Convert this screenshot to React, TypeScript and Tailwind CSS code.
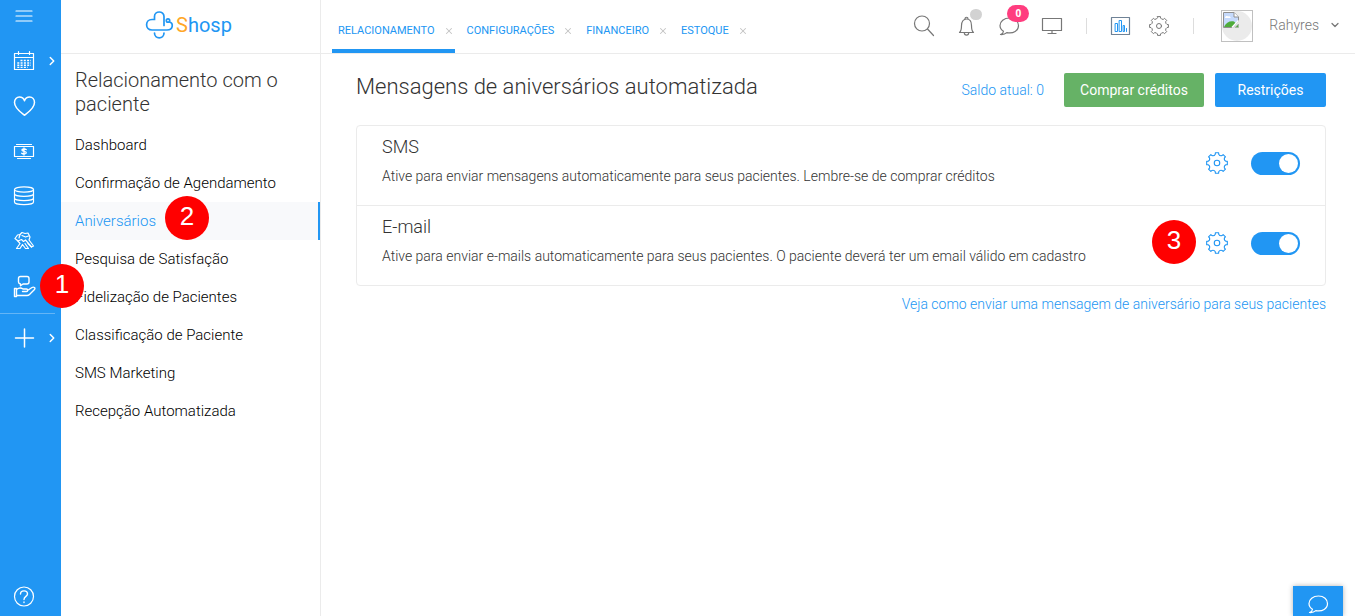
import React, { useState } from "react";
import { ChevronDown, ChevronRight, X } from "lucide-react";

type IconProps = { className?: string };

// Outline of a cog with eight flat teeth and rounded valleys between them
const buildCog = (teeth: number) => {
  const at = (radius: number, deg: number) => {
    const rad = (deg * Math.PI) / 180;
    return `${(12 + radius * Math.cos(rad)).toFixed(2)} ${(12 + radius * Math.sin(rad)).toFixed(2)}`;
  };
  const step = 360 / teeth;
  let d = "";
  for (let i = 0; i < teeth; i++) {
    const a = i * step - 90;
    d += `${i === 0 ? "M" : "L"}${at(11.4, a - 9)} L${at(11.4, a + 9)} L${at(9.8, a + 11)} `;
    d += `Q${at(8, a + step / 2)} ${at(9.8, a + step - 11)} `;
  }
  return d + "Z";
};

const COG_PATH = buildCog(8);

const Line = ({ className = "size-6", children }: IconProps & { children: React.ReactNode }) => (
  <svg viewBox="0 0 24 24" fill="none" stroke="currentColor" strokeWidth="1.2" strokeLinecap="round" strokeLinejoin="round" className={className} aria-hidden="true">
    {children}
  </svg>
);

const CogIcon = ({ className }: IconProps) => (
  <Line className={className}>
    <path d={COG_PATH} />
    <circle cx="12" cy="12" r="3" />
  </Line>
);

const MenuIcon = () => (
  <Line>
    <path d="M4 6.500H20M4 11.500H20M4 16.500H20" transform="translate(0 .5)" />
  </Line>
);

const CalendarIcon = () => (
  <Line>
    <path d="M2.500 4.500h19v16h-19zM2.500 8.500h19M6.500 2.500v3M17.500 2.500v3" />
    <path strokeDasharray="2 1.300" strokeLinecap="butt" strokeWidth="1.400" d="M8.500 11.500h10.500M5.300 14h13.700M5.300 16.300h13.700M5.300 18.400h10.500" />
  </Line>
);

const HeartIcon = () => (
  <Line>
    <path strokeWidth="1.500" d="M12.500 21.300C10 19.200 2.500 14.500 2.500 8.500C2.500 5.300 4.800 3 7.400 3C9.800 3 11.700 4.500 12.500 6.700C13.300 4.500 15.200 3 17.600 3C20.300 3 22.500 5.300 22.500 8.500C22.500 14.500 15 19.200 12.500 21.300Z" />
  </Line>
);

const MoneyIcon = () => (
  <Line>
    <path d="M4.500 5.500h15M5.500 19.500h13M2.500 7.500h19v10h-19z" />
    <path strokeWidth="1.300" d="M14.300 10.600C13.500 9.800 9.900 9.600 9.900 11.100C9.900 12.800 14.300 12 14.300 13.700C14.300 15.300 10.500 15.100 9.700 14.200M12 9v7" />
  </Line>
);

const DatabaseIcon = () => (
  <Line>
    <ellipse cx="12" cy="5.500" rx="9.500" ry="2.700" />
    <path d="M2.500 5.500v12.500c0 1.500 4.200 2.700 9.500 2.700s9.500-1.200 9.500-2.700V5.500M2.500 9.700c0 1.500 4.200 2.700 9.500 2.700s9.500-1.200 9.500-2.700M2.500 13.900c0 1.500 4.200 2.700 9.500 2.700s9.500-1.200 9.500-2.700" />
  </Line>
);

const HandshakeIcon = () => (
  <Line>
    <path d="M3 9.500L5.500 6L8 5.500L10 3.500L13 4.500L16 4L18 8L17 11L21.500 17L19.500 18L13.500 11L11.500 12.500L9.500 10.500L6 12L3 9.500" />
    <path d="M5.500 11.500L8 14.500L4.500 19.500H8L10.500 15.500L13.500 19.500H16.500L13 14.500M10 6.500L13.500 8L16.500 7M19.500 18l-3.500-3.500M8 5.500L7 9" />
  </Line>
);

const HandMessageIcon = () => (
  <Line>
    <path strokeWidth="1.400" d="M8.500 2.500H15C16.300 2.500 17 3.300 17 4.500V8C17 9.200 16.200 10 15 10H11L8.500 11.800V10C7.200 9.800 6.500 9 6.500 8V4.500C6.500 3.300 7.200 2.500 8.500 2.500Z" />
    <path strokeWidth="1.400" d="M2.500 14.500H4.500V22.500H2.500zM4.500 15.500C7 13.500 9 13.500 11 15H14.500C16 15 16 17.500 14.500 17.500H10.500M15.500 16.500L20 13.500C21.800 12.500 23.800 14 22.500 15.500L17.500 20.500C16.800 21.200 16 21.500 15 21.500H4.500" />
  </Line>
);

const PlusIcon = () => (
  <Line>
    <path strokeWidth="1.500" d="M12.500 3v18M3.500 12h18" />
  </Line>
);

const HelpIcon = () => (
  <Line>
    <circle cx="12" cy="12.500" r="9.500" />
    <path strokeWidth="1.400" d="M8.500 10C8.500 5.800 15.500 5.800 15.500 10C15.500 12.500 12 12.300 12 15.500M12 18v.6" />
  </Line>
);

const SearchIcon = () => (
  <Line>
    <circle cx="11" cy="9.500" r="7.500" />
    <path d="M16.500 15L22.500 21.500" />
  </Line>
);

const BellIcon = () => (
  <Line>
    <path d="M5.500 18.500C7.500 17 7.500 15 7.500 11.500C7.500 7.500 9.500 5 12.500 5S17.500 7.500 17.500 11.500C17.500 15 17.500 17 19.500 18.500ZM11 4.800C11 2.700 14 2.700 14 4.800M10.300 18.700C10.300 21.800 14.700 21.800 14.700 18.700" />
  </Line>
);

const ChatIcon = ({ className }: IconProps) => (
  <Line className={className}>
    <path d="M12.500 4C7 4 3 7.300 3 11.500C3 14 4.300 16 6.500 17.300C6.300 19 5.200 20 3.500 20.500C6 20.800 8.300 20 9.800 18.600C16.500 20 21.500 16.500 21.500 11.500C21.500 7.300 18 4 12.500 4Z" />
  </Line>
);

const MonitorIcon = () => (
  <Line>
    <path d="M2.500 4.500h19v12h-19zM12 16.500v3M8 19.500h8" />
  </Line>
);

const ChartIcon = () => (
  <Line>
    <path stroke="#6f8296" d="M2.500 3.500h18v17h-18z" />
    <path d="M6.500 9.500h2v8h-2zM10.500 6.500h2v11h-2zM14.500 11.500h1v6h-1zM17.500 14.500v3" strokeWidth="1" />
  </Line>
);

const LogoMark = () => (
  <svg viewBox="0 0 30 30" fill="none" stroke="#2196f3" strokeWidth="1.700" strokeLinecap="round" className="size-[30px]" aria-hidden="true">
    <path d="M19 15.500V6.500C19 0.500 9.500 0.500 9.500 6.500V9.500H7C-0.200 9.500 -0.200 20 7 20H22C28.500 20 28.500 13 24.500 12" />
    <circle cx="23" cy="10.500" r="1.700" />
    <path d="M9.500 23C9.500 29.500 19 29.500 19 23" />
  </svg>
);

const StepMarker = ({ value, className }: { value: number; className: string }) => (
  <span className={`absolute z-20 flex size-11 items-center justify-center rounded-full bg-[#ff0000] pb-1 font-['Liberation_Sans',sans-serif] text-[26px] leading-none font-normal text-white ${className}`}>
    {value}
  </span>
);

const railItems = [
  { label: "Agenda", icon: CalendarIcon, expandable: true },
  { label: "Pacientes", icon: HeartIcon },
  { label: "Financeiro", icon: MoneyIcon },
  { label: "Estoque", icon: DatabaseIcon },
  { label: "Parcerias", icon: HandshakeIcon },
  { label: "Relacionamento", icon: HandMessageIcon, step: 1 },
];

const menuItems = [
  "Dashboard",
  "Confirmação de Agendamento",
  "Aniversários",
  "Pesquisa de Satisfação",
  "Fidelização de Pacientes",
  "Classificação de Paciente",
  "SMS Marketing",
  "Recepção Automatizada",
];

const tabs = ["RELACIONAMENTO", "CONFIGURAÇÕES", "FINANCEIRO", "ESTOQUE"];

const channels = [
  {
    id: "sms",
    title: "SMS",
    text: "Ative para enviar mensagens automaticamente para seus pacientes. Lembre-se de comprar créditos",
  },
  {
    id: "email",
    title: "E-mail",
    text: "Ative para enviar e-mails automaticamente para seus pacientes. O paciente deverá ter um email válido em cadastro",
    step: 3,
  },
];

function Rail() {
  return (
    <nav aria-label="Módulos" className="flex w-[61px] shrink-0 flex-col bg-[#2196f3] text-white">
      <button aria-label="Menu" className="mb-1.5 flex h-8 items-center pl-3">
        <MenuIcon />
      </button>
      {railItems.map(({ label, icon: Icon, expandable, step }) => (
        <div key={label} className="relative">
          <button aria-label={label} className="flex h-[45px] w-full items-center pl-3">
            <Icon />
            {expandable && <ChevronRight size={14} strokeWidth={2.5} className="ml-[9px]" />}
          </button>
          {step && <StepMarker value={step} className="top-px left-10" />}
        </div>
      ))}
      <div className="mt-[5px] mr-1.5 h-px bg-white/30" />
      <button aria-label="Adicionar" className="flex h-12 items-center pl-3">
        <PlusIcon />
        <ChevronRight size={14} strokeWidth={2.5} className="ml-[9px]" />
      </button>
      <button aria-label="Ajuda" className="mt-auto flex h-10 items-center pl-3">
        <HelpIcon />
      </button>
    </nav>
  );
}

function SideMenu() {
  return (
    <aside className="w-[260px] shrink-0 border-r border-[#ebebeb]">
      <a href="#" aria-label="Shosp" className="flex h-[54px] items-center justify-center gap-px border-b border-[#ebebeb] pr-1 pb-1">
        <LogoMark />
        <span className="text-[20px] leading-none font-normal text-[#2196f3]">
          <span className="text-[#ffa726]">S</span>hosp
        </span>
      </a>
      <h2 className="px-3.5 pt-3.5 pb-2.5 text-xl leading-6 text-[#333]">Relacionamento com o paciente</h2>
      <ul>
        {menuItems.map((item) => (
          <li key={item} className="relative">
            <a
              href="#"
              className={`flex h-[38px] items-center px-3.5 text-[15px] ${
                item === "Aniversários" ? "border-r-2 border-[#2196f3] bg-[#f8f9fb] text-[#2196f3]" : "text-black"
              }`}
            >
              {item}
            </a>
            {item === "Aniversários" && <StepMarker value={2} className="-top-1.5 left-[104px]" />}
          </li>
        ))}
      </ul>
    </aside>
  );
}

function Avatar() {
  return (
    <span className="flex size-8 border border-[#c0c0c0]">
      <svg viewBox="0 0 30 30" className="size-full" role="img" aria-label="Foto do usuário">
        <circle cx="15" cy="15" r="15" fill="#ebebeb" />
        <path d="M1.500 1.500H12L16.500 6V10L11 16.500H1.500Z" fill="#c6dafc" stroke="#909090" />
        <path d="M12 1.500V6H16.500" fill="#fff" stroke="#909090" />
        <path d="M3 7C3 5 5 4.500 6 5.500C8 4.500 9 6 8.500 7Z" fill="#fff" />
        <path d="M2 16C4 11.500 8 9.500 12 10.500L13.500 12L10 16Z" fill="#4fac3b" />
        <path d="M10 16.500L16.500 9.500" stroke="#fff" strokeWidth="1.500" />
        <path d="M13 16.500H16.500V13Z" fill="#4fac3b" stroke="#aaa" strokeWidth=".7" />
      </svg>
    </span>
  );
}

function TopBar() {
  const [active, setActive] = useState("RELACIONAMENTO");

  return (
    <header className="flex h-[54px] items-stretch justify-between border-b border-[#ebebeb] pr-3.5 pl-[11px]">
      {/* Open modules */}
      <div className="flex gap-1.5">
        {tabs.map((tab) => (
          <div key={tab} className={`flex items-center gap-[9px] border-b-4 pt-3 pr-px pl-1.5 ${active === tab ? "border-[#2196f3]" : "border-transparent"}`}>
            <button onClick={() => setActive(tab)} className="text-[11px] leading-4 font-normal text-[#2196f3]">
              {tab}
            </button>
            <button aria-label={`Fechar ${tab}`} className="text-[#c4c4c4]">
              <X size={10} strokeWidth={2.5} />
            </button>
          </div>
        ))}
      </div>

      {/* Shortcuts and account */}
      <div className="flex items-center pb-0.5 text-[#777]">
        <div className="flex gap-[19px]">
          <button aria-label="Buscar"><SearchIcon /></button>
          <button aria-label="Notificações" className="relative">
            <BellIcon />
            <span className="absolute -top-[5px] left-4 h-[11px] w-3 rounded-full bg-[#d2d2d2]" />
          </button>
          <button aria-label="Mensagens" className="relative">
            <ChatIcon />
            <span className="absolute -top-[9px] left-2.5 flex h-[17px] w-[22px] items-center justify-center rounded-full bg-[#ff3d7f] font-['Open_Sans',sans-serif] text-[10px] font-bold text-white">0</span>
          </button>
          <button aria-label="Monitor"><MonitorIcon /></button>
        </div>
        <div className="mx-[22px] h-4 w-px bg-[#ddd]" />
        <div className="flex gap-3.5">
          <button aria-label="Relatórios" className="text-[#2196f3]"><ChartIcon /></button>
          <button aria-label="Configurações"><CogIcon className="size-6 p-0.5" /></button>
        </div>
        <div className="mr-[27px] ml-[22px] h-4 w-px bg-[#ddd]" />
        <Avatar />
        <button className="ml-4 flex items-center gap-2.5 pb-0.5 text-sm text-[#777]">
          Rahyres
          <ChevronDown size={12} strokeWidth={2.5} />
        </button>
      </div>
    </header>
  );
}

function ChannelRow({ id, title, text, step }: { id: string; title: string; text: string; step?: number }) {
  const [enabled, setEnabled] = useState(true);

  return (
    <div className="box-content flex h-[79px] items-start justify-between">
      <div className="pt-[7px] pl-[25px]">
        <h3 className="text-lg leading-7 text-[#333]">{title}</h3>
        <p id={`${id}-text`} className="pt-[5px] text-sm leading-5 text-[#333]">{text}</p>
      </div>
      <div className="flex items-center gap-[22px] pt-[25px] pr-[25px]">
        <div className="relative flex">
          <button aria-label={`Configurar ${title}`} className="text-[#2196f3]">
            <CogIcon className="size-6 p-px" />
          </button>
          {step && <StepMarker value={step} className="-top-[11px] right-[33px]" />}
        </div>
        <label className="relative flex h-[23px] w-[49px] cursor-pointer items-center">
          <input
            type="checkbox"
            role="switch"
            aria-label={title}
            aria-describedby={`${id}-text`}
            checked={enabled}
            onChange={(e) => setEnabled(e.target.checked)}
            className="peer size-full appearance-none rounded-full bg-[#ccc] checked:bg-[#2196f3]"
          />
          <span className="pointer-events-none absolute left-0.5 size-[19px] rounded-full bg-white peer-checked:left-7" />
        </label>
      </div>
    </div>
  );
}

export default function App() {
  return (
    <div className="flex min-h-screen bg-white font-['Roboto',sans-serif] font-light">
      <Rail />
      <SideMenu />
      <div className="min-w-0 flex-1">
        <TopBar />
        <main className="pt-[19px] pr-[29px] pl-[35px]">
          <div className="flex items-start justify-between">
            <h1 className="text-[22px] leading-7 text-[#333]">Mensagens de aniversários automatizada</h1>
            <div className="flex items-center text-sm text-white">
              <span className="mr-5 text-[#2196f3]">Saldo atual: 0</span>
              <button className="mr-[11px] h-[34px] w-[140px] rounded-xs bg-[#66b266] font-normal">Comprar créditos</button>
              <button className="h-[34px] w-[111px] rounded-xs bg-[#2196f3] font-normal">Restrições</button>
            </div>
          </div>

          <section className="mt-[18px] divide-y divide-[#ebebeb] rounded-sm border border-[#ebebeb]">
            {channels.map((channel) => (
              <ChannelRow key={channel.id} {...channel} />
            ))}
          </section>

          <div className="mt-2 text-right text-sm leading-5">
            <a href="#" className="text-[#2196f3]">
              Veja como enviar uma mensagem de aniversário para seus pacientes
            </a>
          </div>
        </main>
      </div>

      <button aria-label="Abrir chat" className="fixed right-3 bottom-0 flex h-[30px] w-[50px] items-end justify-center bg-[#2196f3] text-white shadow-[0_0_5px_rgba(0,0,0,0.3)]">
        <ChatIcon className="size-6" />
      </button>
    </div>
  );
}
